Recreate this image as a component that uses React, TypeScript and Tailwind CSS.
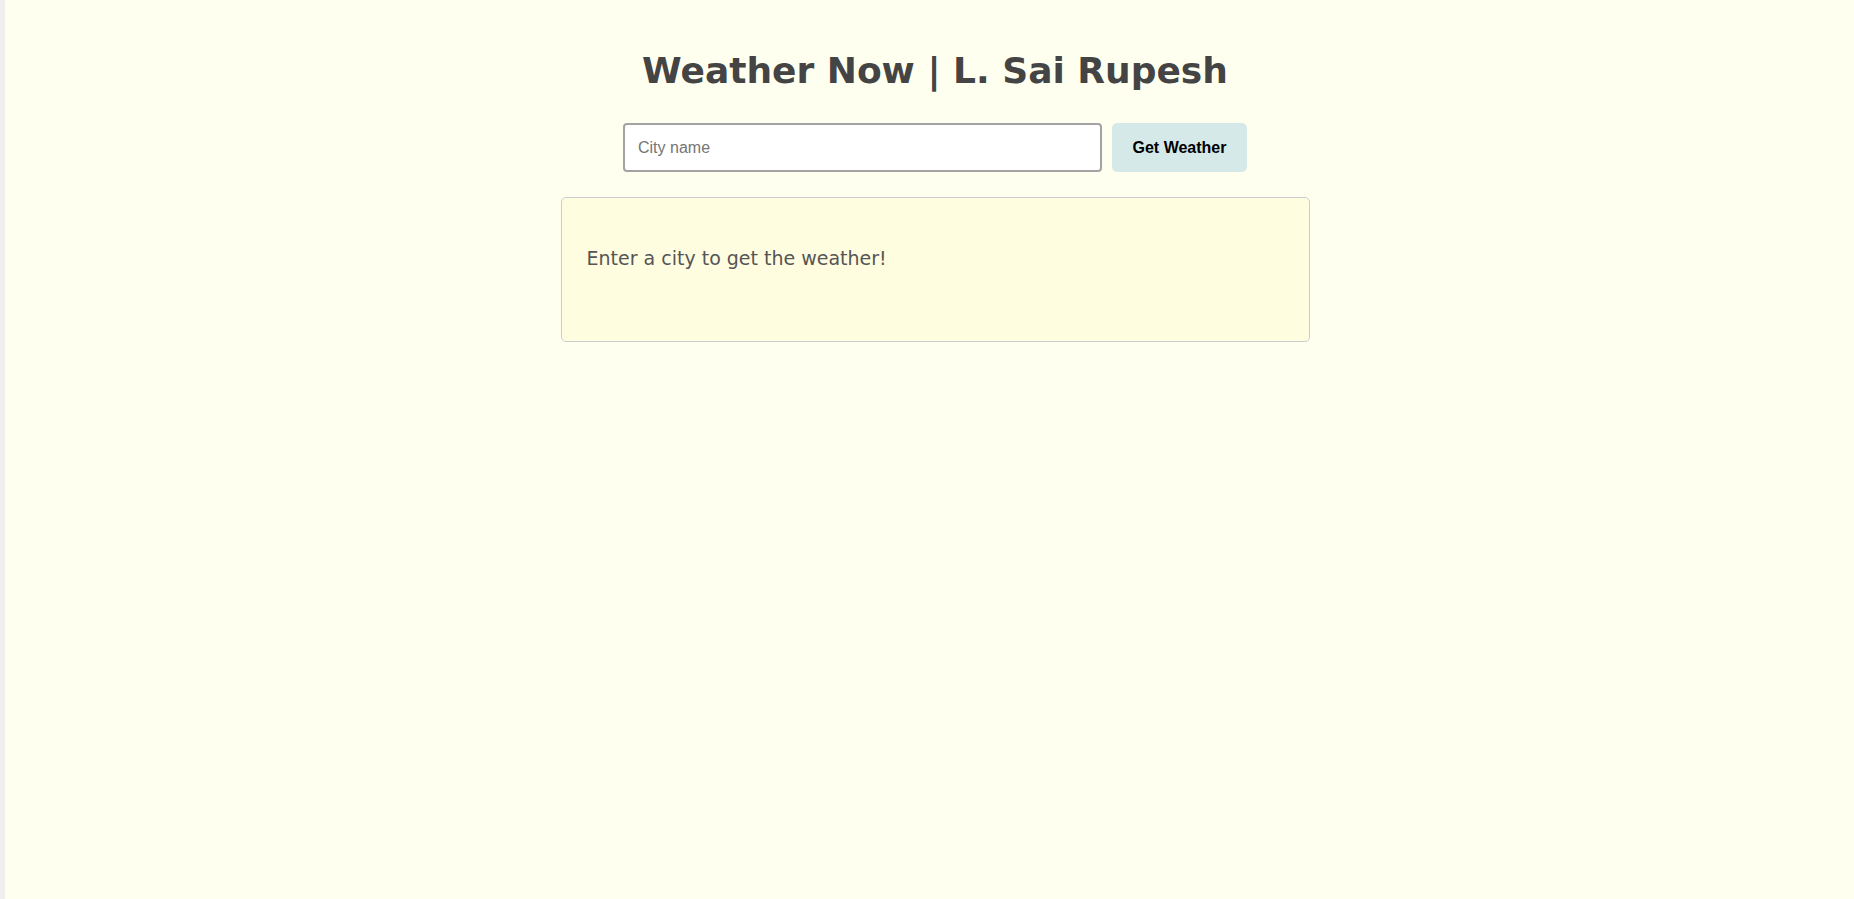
export default function App() {
  return (
    <div className="flex h-[899px] w-full bg-[#fffff0]">
      <div className="w-[5px] shrink-0 bg-[#efefef]" />
      <main className="flex flex-1 flex-col items-center pl-[11px] pt-[47px]">
        <h1
          className="text-[36px] leading-[48px] font-bold text-[#444444]"
          style={{ fontFamily: '"Comic Sans MS", "DejaVu Sans", sans-serif' }}
        >
          Weather Now | L. Sai Rupesh
        </h1>
        <div className="mt-[28px] flex gap-[10px]">
          <input
            type="text"
            placeholder="City name"
            className="h-[49px] w-[479px] rounded-[4px] border-2 border-[#a3a3a3] bg-white px-[13px] text-[16px] text-black placeholder:text-[#757575] outline-none"
            style={{ fontFamily: '"Liberation Sans", Arial, sans-serif' }}
          />
          <button
            className="h-[49px] w-[135px] rounded-[5px] bg-[#d5e9e9] text-[16px] font-bold text-black"
            style={{ fontFamily: '"Liberation Sans", Arial, sans-serif' }}
          >
            Get Weather
          </button>
        </div>
        <div className="mt-[25px] h-[145px] w-[749px] rounded-[5px] border border-[#cccccc] bg-[#fffde0] px-[25px] pt-[48px]">
          <p
            className="text-[19px] leading-[24px] text-[#555555]"
            style={{ fontFamily: '"Comic Sans MS", "DejaVu Sans", sans-serif' }}
          >
            Enter a city to get the weather!
          </p>
        </div>
      </main>
    </div>
  );
}
